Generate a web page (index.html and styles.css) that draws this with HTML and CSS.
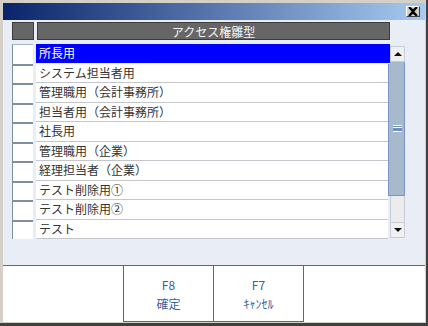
FILE: index.html
```html
<!DOCTYPE html>
<html lang="ja">

<head>
    <meta charset="UTF-8">
    <title>アクセス権雛型</title>
    <link rel="stylesheet" href="styles.css">
</head>

<body>
    <div class="window">
        <!-- Title bar -->
        <div class="titlebar">
            <button class="close-btn" type="button">
                <svg width="10" height="9" viewBox="0 0 10 9">
                    <path d="M1 0 L5 3.5 L9 0 M1 9 L5 5.5 L9 9 M1 0 L9 9 M9 0 L1 9" stroke="#000" stroke-width="2" fill="none"/>
                </svg>
            </button>
        </div>

        <!-- List area -->
        <div class="main">
            <div class="header">
                <div class="head-check"></div>
                <div class="head-title">アクセス権雛型</div>
            </div>

            <div class="list">
                <div class="rows">
                    <div class="row selected"><div class="check"></div><div class="cell">所長用</div></div>
                    <div class="row"><div class="check"></div><div class="cell">システム担当者用</div></div>
                    <div class="row"><div class="check"></div><div class="cell">管理職用（会計事務所）</div></div>
                    <div class="row"><div class="check"></div><div class="cell">担当者用（会計事務所）</div></div>
                    <div class="row"><div class="check"></div><div class="cell">社長用</div></div>
                    <div class="row"><div class="check"></div><div class="cell">管理職用（企業）</div></div>
                    <div class="row"><div class="check"></div><div class="cell">経理担当者（企業）</div></div>
                    <div class="row"><div class="check"></div><div class="cell">テスト削除用①</div></div>
                    <div class="row"><div class="check"></div><div class="cell">テスト削除用②</div></div>
                    <div class="row"><div class="check"></div><div class="cell">テスト</div></div>
                </div>

                <!-- Scrollbar -->
                <div class="scrollbar">
                    <div class="scroll-btn"><span class="arrow-up"></span></div>
                    <div class="thumb"><span class="grip"></span></div>
                    <div class="track"></div>
                    <div class="scroll-btn"><span class="arrow-down"></span></div>
                </div>
            </div>
        </div>

        <!-- Function keys -->
        <div class="footer">
            <div class="fkey">
                <span>F8</span>
                <span>確定</span>
            </div>
            <div class="fkey">
                <span>F7</span>
                <span>ｷｬﾝｾﾙ</span>
            </div>
        </div>
    </div>
</body>

</html>
```

FILE: styles.css
```css
/* Basic styling */
body {
    margin: 0;
    padding: 0;
    overflow: hidden;
    font-family: "Noto Sans CJK JP", "Noto Sans", sans-serif;
    font-size: 12px;
    background: #404040;
}

.window {
    width: 422px;
    height: 319px;
    border-top: 3px solid #d4d0c8;
    border-left: 3px solid #d4d0c8;
    border-right: 1px solid #d4d0c8;
    border-bottom: 1px solid #d4d0c8;
    display: flex;
    flex-direction: column;
    background: #e9edf5;
}

/* Title bar with the classic gradient */
.titlebar {
    height: 17px;
    background: linear-gradient(to right, #0a246a, #a6caf0);
    display: flex;
    justify-content: flex-end;
    align-items: flex-start;
    padding-right: 5px;
}

.close-btn {
    width: 14px;
    height: 11px;
    margin-top: 3px;
    padding: 0;
    border: 1px solid;
    border-color: #fff #404040 #404040 #fff;
    background: #d4d0c8;
    display: flex;
    align-items: center;
    justify-content: center;
}

.main {
    flex: 1;
    padding: 2px 0 0 9px;
}

.header {
    display: flex;
    gap: 3px;
    height: 18px;
    margin-bottom: 4px;
}

.head-check {
    width: 20px;
    background: #666;
    border: 1px solid #3c3c3c;
}

.head-title {
    width: 351px;
    background: #666;
    border: 1px solid #3c3c3c;
    color: #f4f4f8;
    text-align: center;
    line-height: 17px;
}

.list {
    display: flex;
}

.rows {
    width: 376px;
}

.row {
    display: flex;
    gap: 3px;
    height: 19.5px;
}

.check {
    width: 21px;
    background: #fff;
    border-left: 1px solid #7f8fa0;
    border-top: 2px solid #7f8fa0;
    box-sizing: border-box;
}

.row:first-child .check {
    border-top: 1px solid #a8b4c0;
}

.cell {
    flex: 1;
    background: #fff;
    border-bottom: 1px solid #c4c6cc;
    color: #333;
    padding-left: 3px;
    line-height: 18px;
    box-sizing: border-box;
}

.row.selected .cell {
    background: #0000ff;
    color: #fff;
    border-bottom-color: #e9edf5;
    margin-right: -2px;
    position: relative;
}

/* Scrollbar */
.scrollbar {
    width: 17px;
    margin-top: 2px;
    height: 192px;
    display: flex;
    flex-direction: column;
}

.scroll-btn {
    height: 16px;
    margin-left: 2px;
    background: #f0f0f0;
    border: 1px solid #c8ccd4;
    box-sizing: border-box;
    display: flex;
    align-items: center;
    justify-content: center;
}

.arrow-up {
    border-left: 4px solid transparent;
    border-right: 4px solid transparent;
    border-bottom: 4px solid #111;
}

.arrow-down {
    border-left: 4px solid transparent;
    border-right: 4px solid transparent;
    border-top: 4px solid #111;
}

.thumb {
    height: 134px;
    background: #a7b9cd;
    border-left: 1px solid #7a96c8;
    border-right: 1px solid #7a96c8;
    border-bottom: 1px solid #7a96c8;
    box-sizing: border-box;
    display: flex;
    align-items: center;
    justify-content: center;
}

.grip {
    width: 9px;
    height: 5px;
    border-top: 1px solid #fff;
    border-bottom: 1px solid #fff;
    background: linear-gradient(#6f8fc0 0 1px, #fff 1px 2px, #6f8fc0 2px 3px);
    margin-left: 2px;
}

.track {
    flex: 1;
    margin-left: 2px;
    background: #ececec;
    border-left: 1px solid #c8ccd4;
    border-right: 1px solid #c8ccd4;
}

/* Function key area */
.footer {
    height: 56px;
    border-top: 1px solid #666;
    background: #fff;
    display: flex;
    padding-left: 120px;
}

.fkey {
    width: 89px;
    border-left: 1px solid #666;
    border-bottom: 1px solid #666;
    display: flex;
    flex-direction: column;
    align-items: center;
    justify-content: center;
    gap: 2px;
    color: #3a5f9a;
    line-height: 17px;
}

.fkey:last-child {
    border-right: 1px solid #666;
}
```
